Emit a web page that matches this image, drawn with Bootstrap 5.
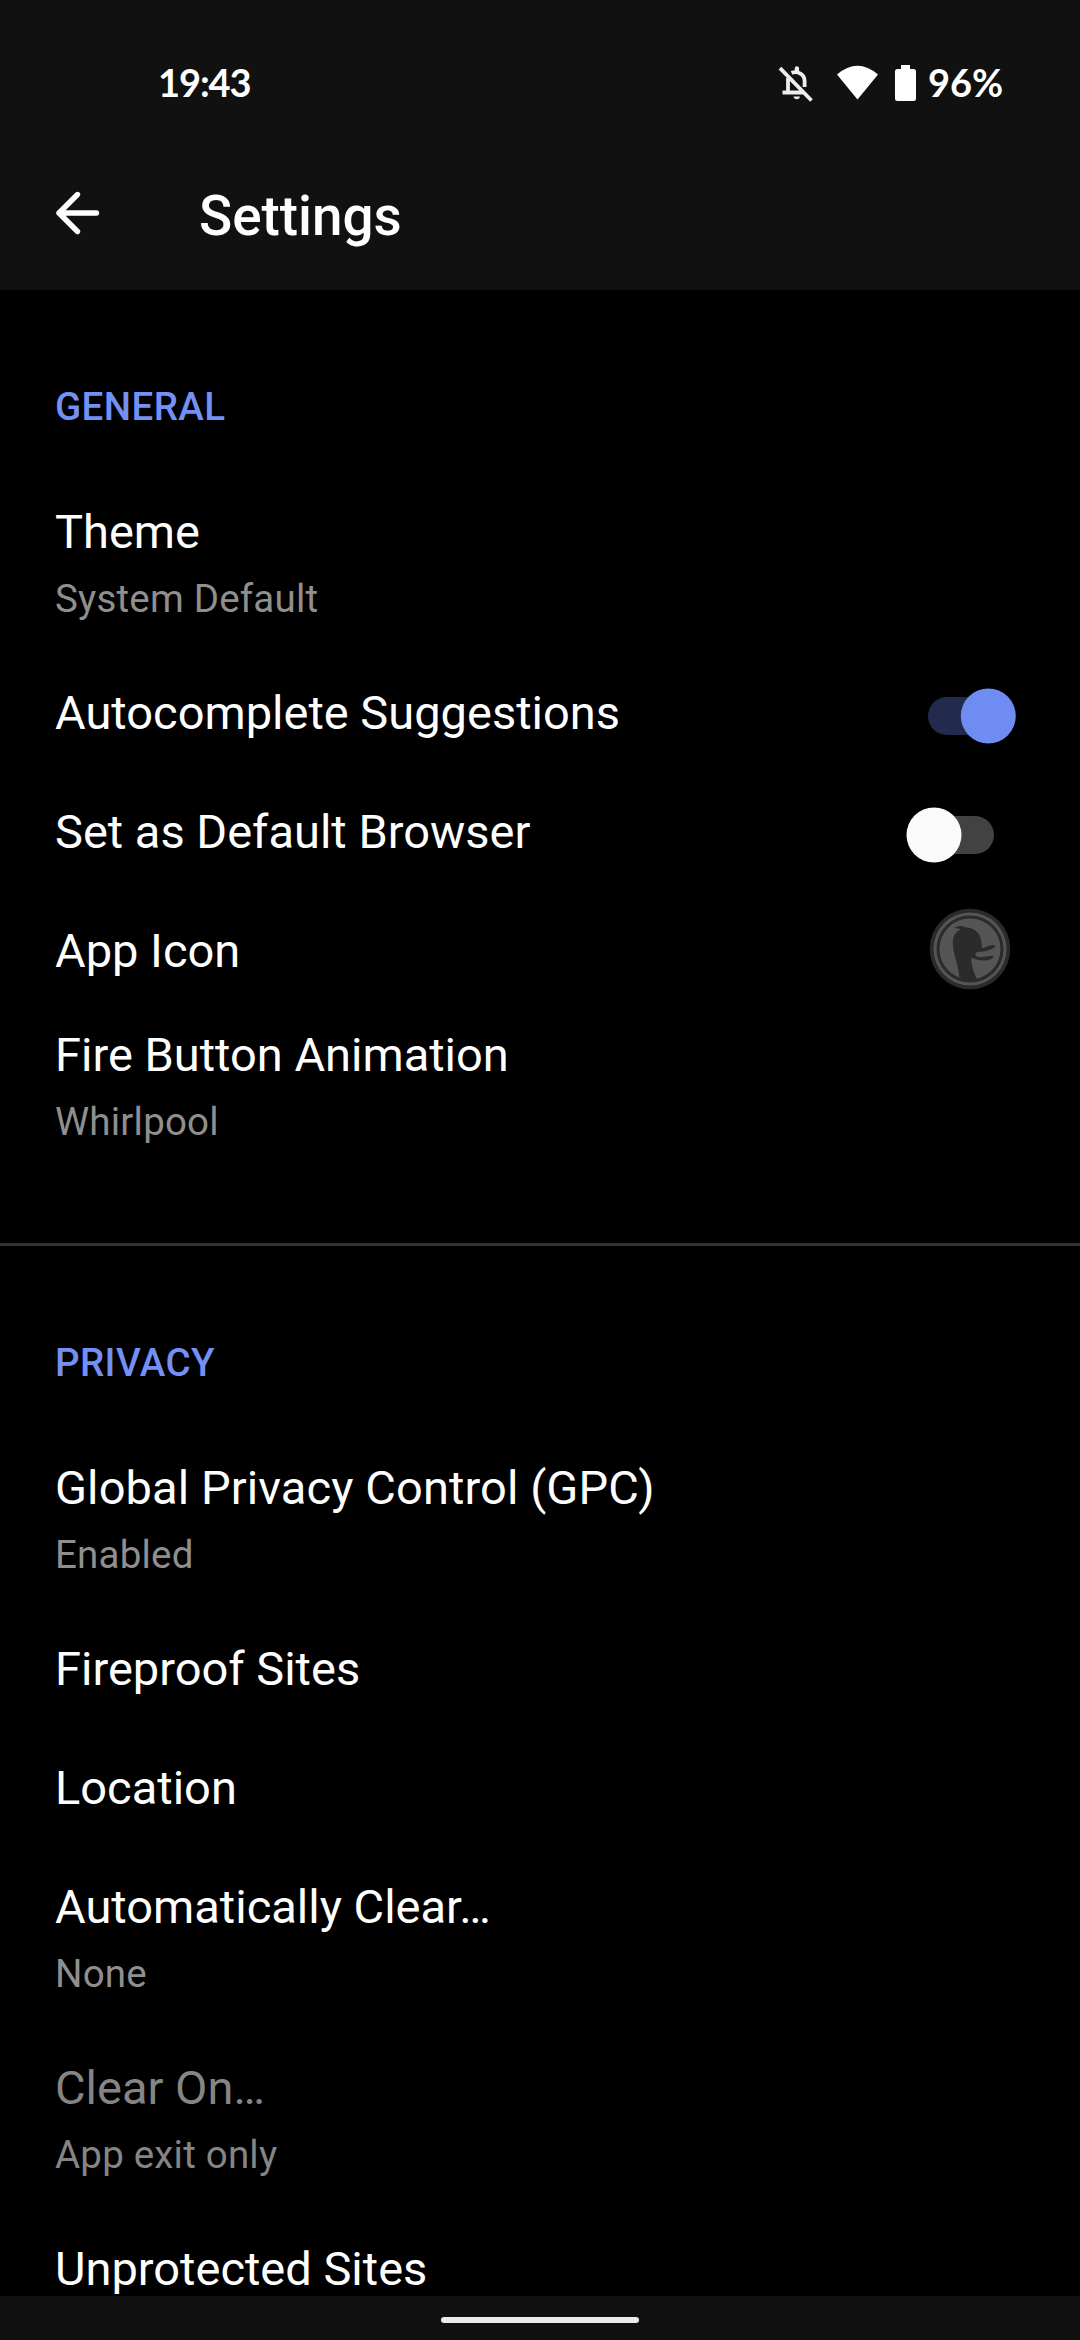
<!DOCTYPE html>
<html lang="en" data-bs-theme="dark">
<head>
<meta charset="utf-8">
<meta name="viewport" content="width=device-width, initial-scale=1">
<title>Settings</title>
<link href="https://cdn.jsdelivr.net/npm/bootstrap@5.3.0/dist/css/bootstrap.min.css" rel="stylesheet">
<style>
body{font-family:Roboto,"Liberation Sans",sans-serif;background:#000;color:#fff}
.screen{height:2340px;width:1080px}
.top-area{background:#111;height:290px}
.status{height:135px;padding:59px 0 0 158px;font-family:"Lato",Roboto,sans-serif;font-weight:700;font-size:38px;line-height:46px}
.clock{width:620px;letter-spacing:-1.1px}
.title-bar{height:155px;padding:0 55px}
.title-bar h1{font-size:54.8px;font-weight:500;line-height:64px;margin:49px 0 0 98px}
.back{margin-top:55px}
.section-head{height:182px;padding:94px 55px 0;font-size:38.5px;line-height:45px;font-weight:500;color:#7390f4;margin:0;letter-spacing:.4px}
.item{background:transparent;border:0;border-radius:0;padding:32px 64px 0 55px;height:119px;color:#fff;font-size:47px;line-height:56px}
.item.two{height:181px}
.item.short{height:104px}
.gpc{letter-spacing:.1px}
.sub{font-size:38.5px;line-height:45px;margin-top:16px;color:#8f8f8f;letter-spacing:.2px}
.muted-item{color:#858585}
.muted-item .sub{color:#858585}
.rule{height:3px;background:#333;margin-top:67px}
.nav-area{background:#111;height:44px}
.pill{width:198px;height:6px;background:#ececec;margin-top:4px}
svg{display:block;flex:none}
</style>
</head>
<body>
<div class="screen d-flex flex-column overflow-hidden">
  <header class="top-area flex-shrink-0">
    <div class="status d-flex align-items-start">
      <div class="clock">19:43</div>
      <svg width="36" height="36" viewBox="0 0 36 36" style="margin-top:7px" fill="none" stroke="#eee" stroke-width="3.800"><path d="M2 2.200L33.500 34.500M10 12v14M4.500 26.500H26M13.500 6.800C20 4.400 26.600 8.500 26.600 15v6"/><path d="M16.700 2.500a2.200 2.200 0 0 1 4.400 0v4h-4.400zM15.500 30.500h6.500a3.300 3.300 0 0 1-6.500 0z" fill="#eee" stroke="none"/></svg>
      <svg width="41" height="35" viewBox="0 0 41 35" style="margin:6px 0 0 23px"><path d="M0 9.500Q20.500-8 41 9.500L20.500 34.500z" fill="#fff"/></svg>
      <svg width="21" height="36" viewBox="0 0 21 36" style="margin:6px 0 0 17px"><path d="M6 0h9v4h3.500Q21 4 21 6.500v27q0 2.500-2.500 2.500h-16Q0 36 0 33.500v-27Q0 4 2.500 4H6z" fill="#fff"/></svg>
      <div class="ms-2 ps-1 batt">96%</div>
    </div>
    <div class="title-bar d-flex">
      <svg class="back" width="46" height="46" viewBox="0 0 46 46" fill="none" stroke="#fff" stroke-width="5.400" stroke-linecap="round" stroke-linejoin="round"><path d="M41.500 23H4M22.500 4.500L4 23l18.500 18.500"/></svg>
      <h1>Settings</h1>
    </div>
  </header>
  <main class="flex-grow-1 overflow-hidden">
    <h2 class="section-head">GENERAL</h2>
    <div class="list-group list-group-flush">
      <div class="list-group-item item two">Theme<div class="sub">System Default</div></div>
      <div class="list-group-item item d-flex justify-content-between align-items-start">Autocomplete Suggestions
        <svg width="110" height="56" viewBox="0 0 110 56" style="margin-top:3px"><rect x="22" y="9" width="75" height="38" rx="19" fill="#222b4d"/><circle cx="82.300" cy="28" r="27.500" fill="#6f8cf3"/></svg></div>
      <div class="list-group-item item d-flex justify-content-between align-items-start">Set as Default Browser
        <svg width="110" height="56" viewBox="0 0 110 56" style="margin-top:3px"><rect x="13" y="9" width="75" height="38" rx="19" fill="#424242"/><circle cx="28" cy="28" r="27.500" fill="#fafafa"/></svg></div>
      <div class="list-group-item item short d-flex justify-content-between align-items-start">App Icon
        <svg width="82" height="82" viewBox="0 0 82 82" style="margin:-15px 5px 0 0"><circle cx="41" cy="41" r="40.300" fill="#2b2b2b"/><circle cx="41" cy="41" r="36.500" fill="#555"/><circle cx="41" cy="41" r="32" fill="#555" stroke="#2b2b2b" stroke-width="3"/>
        <path d="M30.500 71.500C30 58 25 49 24 38.500C23.200 29 26 23.500 32 21.600C30 20.500 27.500 20.300 25.500 20C29 17.500 33 17.500 36 19.200C47 20 53 26 52.600 38C53 40.500 54 40.300 56 39.500C60 37.500 65 36 66 37.500C67 39.500 62 41.500 57 43C53 44.200 48.500 43 46.500 45.200C45.500 48.500 50 49.500 54 49C58 48.500 64 46.500 64.500 48.500C64.500 50.500 60 52.500 54 52.500C49.500 52.500 45 50.500 42.500 49.500C41.500 57 45.500 66 48.500 72Q40 75 30.500 71.500z" fill="#2b2b2b"/></svg></div>
      <div class="list-group-item item two">Fire Button Animation<div class="sub">Whirlpool</div></div>
    </div>
    <div class="rule"></div>
    <h2 class="section-head">PRIVACY</h2>
    <div class="list-group list-group-flush">
      <div class="list-group-item item two gpc">Global Privacy Control (GPC)<div class="sub">Enabled</div></div>
      <div class="list-group-item item">Fireproof Sites</div>
      <div class="list-group-item item">Location</div>
      <div class="list-group-item item two">Automatically Clear…<div class="sub">None</div></div>
      <div class="list-group-item item two muted-item">Clear On…<div class="sub">App exit only</div></div>
      <div class="list-group-item item">Unprotected Sites</div>
    </div>
  </main>
  <footer class="nav-area flex-shrink-0 d-flex justify-content-center align-items-center"><div class="pill rounded-pill"></div></footer>
</div>
<script src="https://cdn.jsdelivr.net/npm/bootstrap@5.3.0/dist/js/bootstrap.bundle.min.js"></script>
</body>
</html>
